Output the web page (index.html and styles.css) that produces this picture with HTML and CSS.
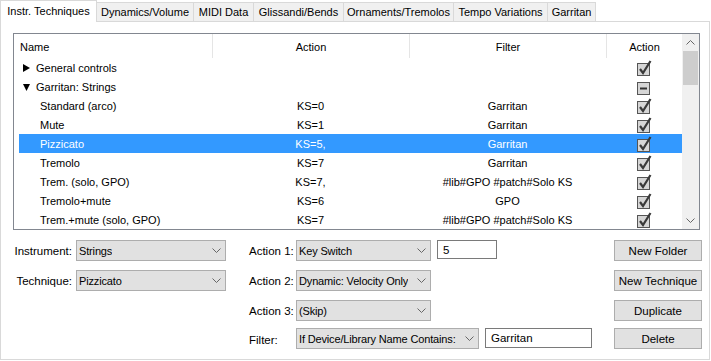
FILE: index.html
```html
<!DOCTYPE html>
<html lang="en">
<head>
  <meta charset="UTF-8">
  <title>Instrument Techniques</title>
  <link rel="stylesheet" href="styles.css">
</head>
<body>
  <svg class="defs" width="0" height="0">
    <symbol id="chk" viewBox="0 0 16 17">
      <rect x="1.5" y="4.5" width="12" height="12" fill="#d6d6d6" stroke="#555"/>
      <polyline points="4,10 7,14 14.5,2" fill="none" stroke="#3a3a3a" stroke-width="2.2"/>
    </symbol>
    <symbol id="mixed" viewBox="0 0 16 17">
      <rect x="1.5" y="4.5" width="12" height="12" fill="#d6d6d6" stroke="#555"/>
      <line x1="4" y1="10.5" x2="11" y2="10.5" stroke="#333" stroke-width="2"/>
    </symbol>
    <symbol id="chev" viewBox="0 0 9 5">
      <polyline points="0.5,0.5 4.5,4.5 8.5,0.5" fill="none" stroke="#666" stroke-width="1"/>
    </symbol>
  </svg>

  <div class="tabs">
    <div class="tab active">Instr. Techniques</div>
    <div class="tab">Dynamics/Volume</div>
    <div class="tab">MIDI Data</div>
    <div class="tab">Glissandi/Bends</div>
    <div class="tab">Ornaments/Tremolos</div>
    <div class="tab">Tempo Variations</div>
    <div class="tab">Garritan</div>
  </div>

  <div class="panel">
    <div class="list">
      <div class="list-body">
        <div class="list-head">
          <div class="col-name">Name</div>
          <div class="col-action">Action</div>
          <div class="col-filter">Filter</div>
          <div class="col-check">Action</div>
        </div>

        <div class="row">
          <div class="cell-name folder"><svg class="tri" width="7" height="8"><polygon points="0,0 7,4 0,8" fill="#000"/></svg>General controls</div>
          <div class="cell-action"></div>
          <div class="cell-filter"></div>
          <div class="cell-check"><svg class="cb"><use href="#chk"/></svg></div>
        </div>
        <div class="row">
          <div class="cell-name folder"><svg class="tri" width="7" height="8"><polygon points="0,1 7,1 3.5,8" fill="#000"/></svg>Garritan: Strings</div>
          <div class="cell-action"></div>
          <div class="cell-filter"></div>
          <div class="cell-check"><svg class="cb"><use href="#mixed"/></svg></div>
        </div>
        <div class="row">
          <div class="cell-name">Standard (arco)</div>
          <div class="cell-action">KS=0</div>
          <div class="cell-filter">Garritan</div>
          <div class="cell-check"><svg class="cb"><use href="#chk"/></svg></div>
        </div>
        <div class="row">
          <div class="cell-name">Mute</div>
          <div class="cell-action">KS=1</div>
          <div class="cell-filter">Garritan</div>
          <div class="cell-check"><svg class="cb"><use href="#chk"/></svg></div>
        </div>
        <div class="row selected">
          <div class="cell-name">Pizzicato</div>
          <div class="cell-action">KS=5,</div>
          <div class="cell-filter">Garritan</div>
          <div class="cell-check"><svg class="cb"><use href="#chk"/></svg></div>
        </div>
        <div class="row">
          <div class="cell-name">Tremolo</div>
          <div class="cell-action">KS=7</div>
          <div class="cell-filter">Garritan</div>
          <div class="cell-check"><svg class="cb"><use href="#chk"/></svg></div>
        </div>
        <div class="row">
          <div class="cell-name">Trem. (solo, GPO)</div>
          <div class="cell-action">KS=7,</div>
          <div class="cell-filter">#lib#GPO #patch#Solo KS</div>
          <div class="cell-check"><svg class="cb"><use href="#chk"/></svg></div>
        </div>
        <div class="row">
          <div class="cell-name">Tremolo+mute</div>
          <div class="cell-action">KS=6</div>
          <div class="cell-filter">GPO</div>
          <div class="cell-check"><svg class="cb"><use href="#chk"/></svg></div>
        </div>
        <div class="row">
          <div class="cell-name">Trem.+mute (solo, GPO)</div>
          <div class="cell-action">KS=7</div>
          <div class="cell-filter">#lib#GPO #patch#Solo KS</div>
          <div class="cell-check"><svg class="cb"><use href="#chk"/></svg></div>
        </div>
      </div>

      <div class="scrollbar">
        <div class="sb-btn"><svg class="sb-arrow up" width="9" height="5"><use href="#chev"/></svg></div>
        <div class="sb-thumb"></div>
        <div class="sb-track"></div>
        <div class="sb-btn"><svg class="sb-arrow" width="9" height="5"><use href="#chev"/></svg></div>
      </div>
    </div>

    <div class="form">
      <label class="lbl-right">Instrument:</label>
      <div><div class="combo w150"><span>Strings</span><svg class="chev"><use href="#chev"/></svg></div></div>
      <label class="lbl">Action 1:</label>
      <div class="inline">
        <div class="combo w135"><span>Key Switch</span><svg class="chev"><use href="#chev"/></svg></div>
        <div class="textbox w60">5</div>
      </div>
      <button class="btn">New Folder</button>

      <label class="lbl-right">Technique:</label>
      <div><div class="combo w150"><span>Pizzicato</span><svg class="chev"><use href="#chev"/></svg></div></div>
      <label class="lbl">Action 2:</label>
      <div class="inline">
        <div class="combo w135"><span>Dynamic: Velocity Only</span><svg class="chev"><use href="#chev"/></svg></div>
      </div>
      <button class="btn">New Technique</button>

      <div></div>
      <div></div>
      <label class="lbl">Action 3:</label>
      <div class="inline">
        <div class="combo w135"><span>(Skip)</span><svg class="chev"><use href="#chev"/></svg></div>
      </div>
      <button class="btn">Duplicate</button>

      <div class="last"></div>
      <div class="last"></div>
      <label class="lbl last">Filter:</label>
      <div class="inline last">
        <div class="combo w183"><span>If Device/Library Name Contains:</span><svg class="chev"><use href="#chev"/></svg></div>
        <div class="textbox w107">Garritan</div>
      </div>
      <button class="btn last">Delete</button>
    </div>
  </div>
</body>
</html>
```

FILE: styles.css
```css
body {
  margin: 0;
  background: #ffffff;
  font-family: 'Liberation Sans', Arial, sans-serif;
  font-size: 11px;
  color: #000;
}
.defs {
  position: absolute;
}

/* tabs */
.tabs {
  display: flex;
  align-items: flex-end;
  height: 21px;
}
.tab {
  height: 19px;
  box-sizing: border-box;
  background: #f0f0f0;
  border-top: 1px solid #d9d9d9;
  border-right: 1px solid #d9d9d9;
  display: flex;
  align-items: center;
  justify-content: center;
  white-space: nowrap;
}
.tab:nth-child(2) { width: 97px; }
.tab:nth-child(3) { width: 60px; }
.tab:nth-child(4) { width: 90px; }
.tab:nth-child(5) { width: 110px; }
.tab:nth-child(6) { width: 94px; }
.tab:nth-child(7) { width: 48px; }
.tab.active {
  width: 97px;
  height: 22px;
  margin-bottom: -1px;
  background: #fff;
  border-left: 1px solid #d9d9d9;
  padding-bottom: 2px;
  position: relative;
  z-index: 1;
}

/* panel */
.panel {
  width: 710px;
  height: 339px;
  box-sizing: border-box;
  border: 1px solid #d9d9d9;
  padding: 11px 0 0 12px;
}

/* list view */
.list {
  width: 687px;
  height: 197px;
  box-sizing: border-box;
  border: 1px solid #828790;
  display: flex;
}
.list-body {
  flex: 1;
  overflow: hidden;
}
.list-head {
  display: flex;
  height: 24px;
  align-items: stretch;
}
.list-head > div {
  display: flex;
  align-items: center;
  justify-content: center;
  flex-shrink: 0;
  padding-top: 1px;
}
.list-head .col-name {
  width: 198px;
  justify-content: flex-start;
  padding-left: 6px;
  box-sizing: border-box;
}
.list-head .col-action,
.list-head .col-filter {
  width: 197px;
  border-left: 1px solid #e5e5e5;
  box-sizing: border-box;
}
.list-head .col-check {
  width: 76px;
  border-left: 1px solid #e5e5e5;
  box-sizing: border-box;
}

.row {
  display: flex;
  height: 19px;
  margin-left: 5px;
  align-items: center;
  white-space: nowrap;
}
.row > div {
  flex-shrink: 0;
}
.row.selected {
  background: #3399ff;
  color: #fff;
}
.cell-name {
  width: 193px;
  padding-left: 21px;
  box-sizing: border-box;
  display: flex;
  align-items: center;
}
.cell-name.folder {
  padding-left: 4px;
}
.tri {
  margin-right: 6px;
}
.cell-action,
.cell-filter {
  width: 197px;
  text-align: center;
}
.cell-check {
  width: 77px;
  display: flex;
  justify-content: center;
}
.cb {
  width: 16px;
  height: 17px;
  margin-left: -2px;
}

/* scrollbar */
.scrollbar {
  width: 17px;
  background: #f0f0f0;
  display: flex;
  flex-direction: column;
}
.sb-btn {
  height: 17px;
  display: flex;
  align-items: center;
  justify-content: center;
}
.sb-arrow.up {
  transform: rotate(180deg);
}
.sb-thumb {
  height: 34px;
  margin: 0 1px;
  background: #cdcdcd;
}
.sb-track {
  flex: 1;
}

/* form */
.form {
  display: grid;
  grid-template-columns: 63px 173px 47px 318px 88px;
  grid-template-rows: 21px 21px 21px 21px;
  row-gap: 9px;
  margin-top: 10px;
  font-size: 11.5px;
}
.form .last {
  margin-top: -2px;
}
.lbl,
.lbl-right {
  display: flex;
  align-items: center;
}
.lbl-right {
  justify-content: flex-end;
  padding-right: 4px;
}
.inline {
  display: flex;
  align-items: flex-start;
  gap: 6px;
}
.combo {
  height: 21px;
  box-sizing: border-box;
  background: #e1e1e1;
  border: 1px solid #adadad;
  padding-left: 2px;
  display: flex;
  align-items: center;
  justify-content: space-between;
  white-space: nowrap;
  font-size: 11px;
  letter-spacing: -0.15px;
}
.combo span {
  overflow: hidden;
  min-width: 0;
}
.chev {
  width: 9px;
  height: 5px;
  margin: 0 4px 0 2px;
  flex-shrink: 0;
}
.w150 { width: 150px; }
.w135 { width: 135px; }
.w183 { width: 183px; }
.w60 { width: 60px; height: 19px; }
.w107 { width: 107px; height: 20px; }
.textbox {
  box-sizing: border-box;
  background: #fff;
  border: 1px solid #7a7a7a;
  padding-left: 5px;
  display: flex;
  align-items: center;
}
.btn {
  width: 88px;
  height: 21px;
  box-sizing: border-box;
  background: #e1e1e1;
  border: 1px solid #adadad;
  font-family: 'Liberation Sans', Arial, sans-serif;
  font-size: 11.5px;
  color: #000;
  padding: 0;
}
```
